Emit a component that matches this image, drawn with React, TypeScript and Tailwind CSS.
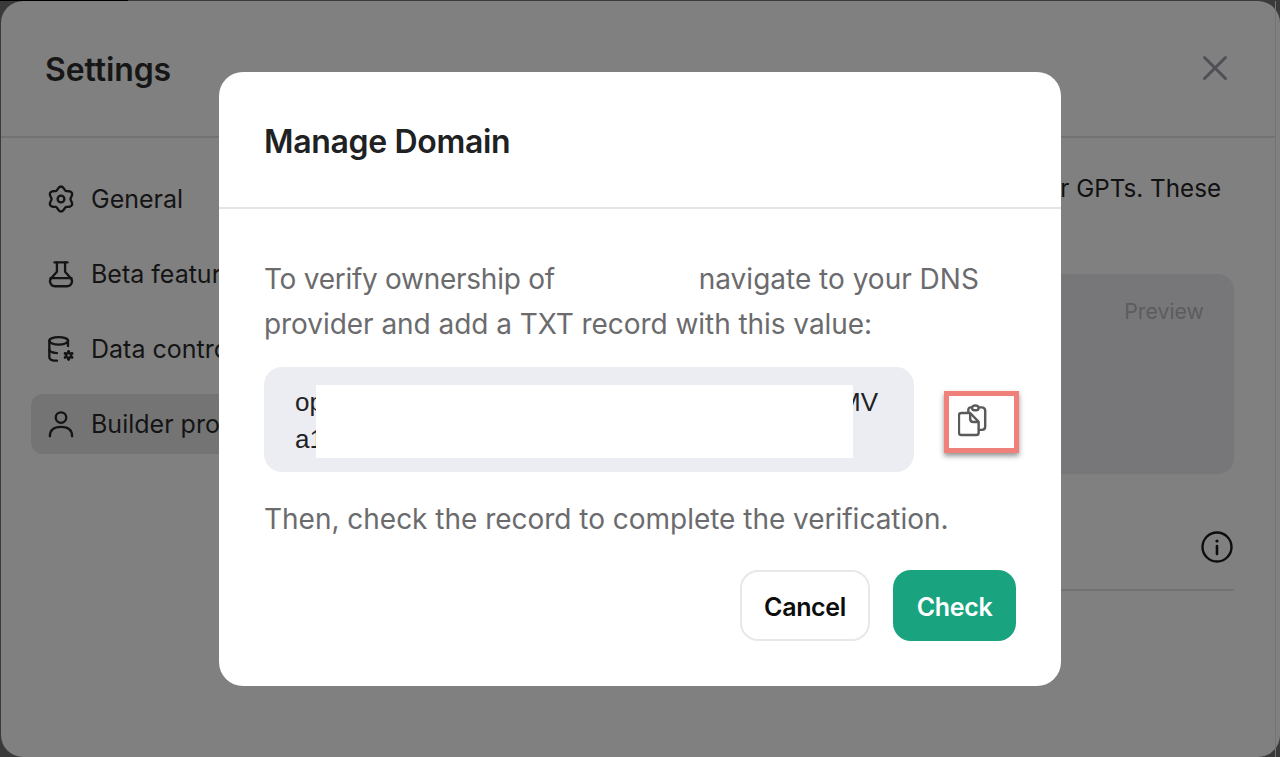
import React from 'react';

// six lobed outline, used for the settings gear and the little gear on the data icon
const lobedPath = (cx: number, cy: number, base: number, bump: number) => {
  const points = Array.from({ length: 72 }, (_, i) => {
    const angle = (i / 72) * Math.PI * 2;
    const radius = base + bump * Math.cos(6 * angle);
    return `${(cx + radius * Math.sin(angle)).toFixed(2)} ${(cy - radius * Math.cos(angle)).toFixed(2)}`;
  });
  return `M${points.join('L')}Z`;
};

const GearIcon = () => (
  <svg width="28" height="28" viewBox="0 0 24 24" fill="none" stroke="currentColor" strokeWidth="2" strokeLinejoin="round">
    <path d={lobedPath(12, 12, 9.4, 1.3)} />
    <circle cx="12" cy="12" r="2.900" />
  </svg>
);

const FlaskIcon = () => (
  <svg width="28" height="28" viewBox="0 0 24 24" fill="none" stroke="currentColor" strokeWidth="2" strokeLinecap="round" strokeLinejoin="round">
    <path d="M6.500 2h11" />
    <path d="M8.500 2v8L3.400 15.800C1.500 18.200 3.200 22.500 6.500 22.500h11c3.300 0 5-4.300 3.100-6.700L15.500 10V2" />
    <path d="M3 15.500h18" />
  </svg>
);

const DataIcon = () => (
  <svg width="28" height="28" viewBox="0 0 24 24" fill="none" stroke="currentColor" strokeWidth="2" strokeLinecap="round" strokeLinejoin="round">
    <ellipse cx="10" cy="5" rx="8" ry="3.200" />
    <path d="M2 5v14c0 1.800 2.500 3 6.500 3" />
    <path d="M18 5v4.500" />
    <path d="M2 12.500c0 1.600 2.500 2.800 6.500 3" />
    <path d={lobedPath(18.500, 17.500, 3.200, 1)} fill="currentColor" strokeWidth="1" />
    <circle cx="18.500" cy="17.500" r="1" fill="#808080" stroke="none" />
  </svg>
);

const PersonIcon = () => (
  <svg width="28" height="28" viewBox="0 0 24 24" fill="none" stroke="currentColor" strokeWidth="2" strokeLinecap="round">
    <circle cx="12" cy="6.500" r="4.500" />
    <path d="M2.500 22.500c0-5.500 3.800-8 9.500-8s9.500 2.500 9.500 8" />
  </svg>
);

const ClipboardIcon = () => (
  <svg width="30" height="35" viewBox="0 0 32 34" fill="none" stroke="#5a5a5a" strokeWidth="2.600" strokeLinejoin="round">
    <path d="M11 8V5.500C11 4 12 3 13.500 3H15c.5-1.500 1.500-2 3.500-2s3 .5 3.500 2h3C27.500 3 29 4.500 29 6.500v17c0 2-1.500 3.500-3.500 3.500H22" />
    <path d="M15 3.500c0 1.500 1 2.500 2 2.500h3c1 0 2-1 2-2.500" />
    <path d="M3.500 9H13l9 9.500V30c0 1.500-1 2.500-2.500 2.500h-16C2 32.500 1 31.500 1 30V11.500C1 10 2 9 3.500 9Z" />
    <path d="M13 9v6c0 2 1.500 3.500 3.500 3.500H22" />
  </svg>
);

export default function App() {
  const navItems = [
    { label: 'General', icon: <GearIcon /> },
    { label: 'Beta features', icon: <FlaskIcon /> },
    { label: 'Data controls', icon: <DataIcon /> },
    { label: 'Builder profile', icon: <PersonIcon />, active: true },
  ];

  return (
    <div className="relative w-full h-[757px] overflow-hidden bg-[#3a3a3a] pl-px pt-px font-['Inter',sans-serif]">
      <div className="absolute top-0 left-0 h-px w-[128px] bg-black" />

      {/* settings page behind the backdrop */}
      <div className="h-full rounded-[22px] bg-[#808080] pr-[4px]">
        <div className="h-full border-r border-[#747474] flex flex-col">
          <div className="h-[137px] shrink-0 border-b-2 border-[#737373] pl-[44px] pr-[47px] pt-[2px] flex items-center justify-between">
            <h1 className="text-[32px] font-semibold tracking-[-0.1px] text-[#161616]">Settings</h1>
            <svg className="mb-[4px]" width="26" height="26" viewBox="0 0 26 26" fill="none" stroke="#4f4f55" strokeWidth="3" strokeLinecap="round">
              <path d="M2.500 2.500l21 21M23.500 2.500l-21 21" />
            </svg>
          </div>

          <div className="flex-1 flex">
            <div className="w-[400px] shrink-0 pl-[30px] pt-[31px] flex flex-col gap-[15px]">
              {navItems.map((item) => (
                <div
                  key={item.label}
                  className={`h-[60px] rounded-[12px] pl-[16px] flex items-center gap-[16px] text-[25px] text-[#141414] ${item.active ? 'bg-[#747474]' : ''}`}
                >
                  {item.icon}
                  <span className="whitespace-nowrap pt-[2px]">{item.label}</span>
                </div>
              ))}
            </div>

            <div className="flex-1 pr-[41px] flex flex-col items-end">
              <p className="mt-[32px] pr-[13px] h-[38px] text-[24.2px] leading-[38px] text-[#111111] whitespace-nowrap">r GPTs. These</p>
              <div className="mt-[66px] h-[200px] w-[400px] rounded-[16px] bg-[#77777a] pt-[22px] pr-[30px] flex justify-end">
                <span className="text-[21.3px] text-[#5c5c5e]">Preview</span>
              </div>
              <div className="h-[117px] w-[400px] border-b-2 border-[#727272] flex items-center justify-end pt-[31px] pr-[1px]">
                <svg width="32" height="32" viewBox="0 0 32 32" fill="none" stroke="#0d0d0d" strokeWidth="2.400" strokeLinecap="round">
                  <circle cx="16" cy="16" r="14.500" />
                  <path d="M16 15v8" strokeWidth="2.600" />
                  <circle cx="16" cy="10" r="1.600" fill="#0d0d0d" stroke="none" />
                </svg>
              </div>
            </div>
          </div>
        </div>
      </div>

      {/* Manage Domain dialog */}
      <div className="absolute inset-0 flex items-center justify-center">
        <div className="mt-px w-[842px] h-[614px] rounded-[24px] bg-white flex flex-col">
          <div className="h-[137px] shrink-0 border-b-2 border-[#e5e5e5] pl-[45px] pt-[4px] flex items-center">
            <h2 className="text-[32px] font-semibold tracking-[-0.33px] text-[#202123]">Manage Domain</h2>
          </div>

          <div className="flex-1 pl-[45px] pr-[42px] pt-[48px] flex flex-col">
            <p className="text-[28px] leading-[45px] text-[#6b6b6e]">
              <span className="tracking-[-0.27px]">To verify ownership of</span>
              <span className="inline-block w-[144px]" />navigate to your DNS
              <br />
              <span className="tracking-[-0.05px]">provider and add a TXT record with this value:</span>
            </p>

            <div className="mt-[20px] flex items-start">
              <div className="relative w-[650px] h-[105px] rounded-[18px] bg-[#ecedf2] pl-[31px] pt-[17px] font-['Liberation_Sans',sans-serif] text-[26px] leading-[37px] text-[#202123]">
                <div className="flex justify-between pr-[36px]">
                  <span>op</span>
                  <span>MV</span>
                </div>
                <div>a1</div>
                <div className="absolute left-[52px] top-[18px] w-[537px] h-[73px] bg-white" />
              </div>
              <div className="ml-[30px] mt-[24px] w-[75px] h-[62px] border-[5px] border-[#f0817a] shadow-[0_3px_5px_rgba(60,60,60,0.55)] flex items-center pl-[9px] pb-[3px]">
                <ClipboardIcon />
              </div>
            </div>

            <p className="mt-[25px] text-[28px] leading-[45px] tracking-[-0.02px] text-[#6b6b6e]">Then, check the record to complete the verification.</p>

            <div className="mt-[28px] pr-[3px] flex justify-end gap-[23px]">
              <button className="w-[130px] h-[71px] pt-[4px] rounded-[18px] border-2 border-[#e8e8e8] bg-white text-[25px] font-semibold tracking-[-0.35px] text-[#0d0d0d]">Cancel</button>
              <button className="w-[123px] h-[71px] pt-[4px] rounded-[18px] bg-[#19a37f] text-[25px] font-semibold tracking-[-0.35px] text-white">Check</button>
            </div>
          </div>
        </div>
      </div>
    </div>
  );
}
